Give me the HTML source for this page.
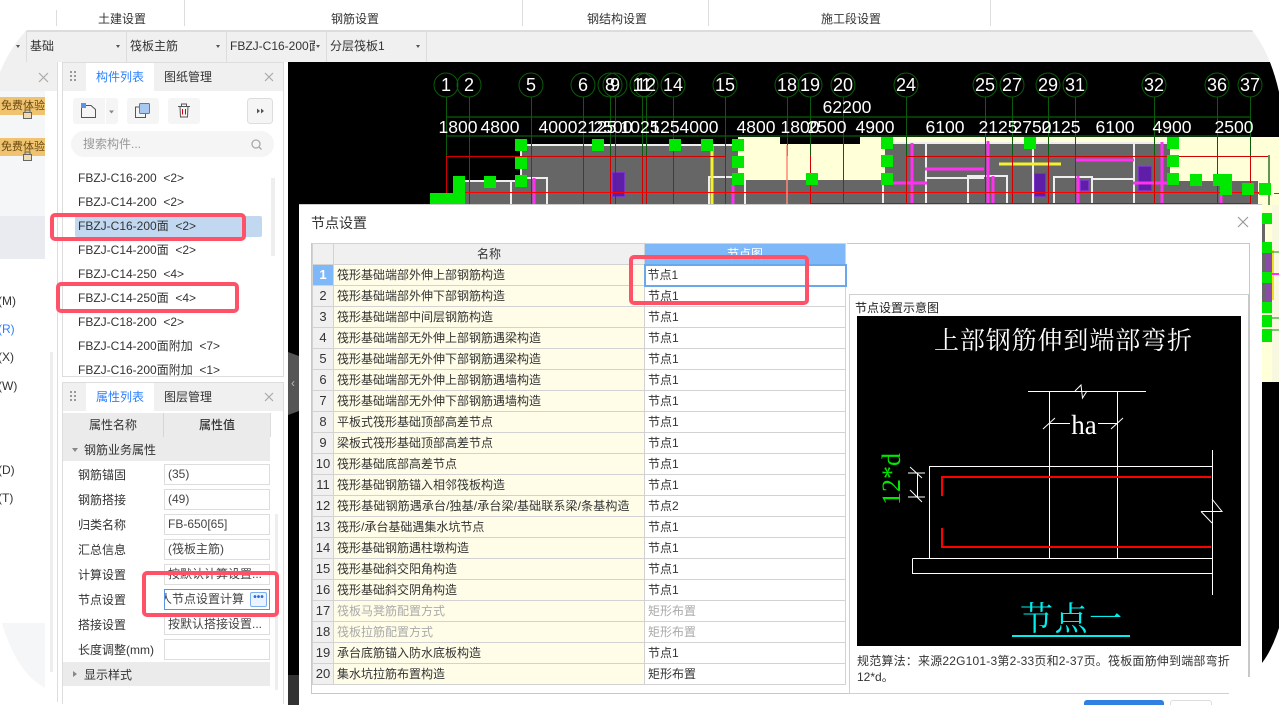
<!DOCTYPE html>
<html lang="zh"><head><meta charset="utf-8"><title>节点设置</title>
<style>
*{box-sizing:border-box}
html,body{margin:0;padding:0;width:1279px;height:705px;overflow:hidden;background:#fff}
body{position:relative;font:12px/20px "Liberation Sans","Noto Sans CJK SC",sans-serif;color:#333}
.a{position:absolute}
.t{position:absolute;white-space:nowrap;line-height:20px}
.dv{position:absolute;width:1px;background:#ddd}
.arrow{position:absolute;top:45px;width:0;height:0;border-left:2.5px solid transparent;border-right:2.5px solid transparent;border-top:3px solid #555}
.inp{position:absolute;left:164px;width:106px;height:21px;border:1px solid #ddd;background:#fff;padding-left:3px;line-height:19px;white-space:nowrap;overflow:hidden;color:#444}
.red{position:absolute;border:4px solid #ff5268;border-radius:5px;z-index:50}
table{position:absolute;left:312px;top:243px;border-collapse:collapse;table-layout:fixed;width:533px;background:#fff}
td,th{border:1px solid #d2d2d2;height:21px;padding:0 0 0 3px;font-weight:400;font-size:12px;line-height:18px;white-space:nowrap;overflow:hidden;color:#333}
th{background:#f0f0f0;text-align:center;padding:0}
td.n{background:#f0f0f0;text-align:center;padding:0;font-size:13px}
td.y{background:#fffde8}
tr.g td.y,tr.g td.v{color:#aaa}
svg{position:absolute;left:0;top:0}
</style></head><body>

<!-- top bar -->
<div class="dv" style="left:56px;top:10px;height:16px"></div>
<div class="dv" style="left:184px;top:0;height:26px"></div>
<div class="dv" style="left:522px;top:0;height:26px"></div>
<div class="dv" style="left:708px;top:0;height:26px"></div>
<div class="dv" style="left:990px;top:0;height:26px"></div>
<div class="t" style="left:98px;top:9px">土建设置</div>
<div class="t" style="left:331px;top:9px">钢筋设置</div>
<div class="t" style="left:587px;top:9px">钢结构设置</div>
<div class="t" style="left:821px;top:9px">施工段设置</div>

<!-- toolbar -->
<div class="a" style="left:0;top:30px;width:1279px;height:32px;background:#f0f0f0;border-top:2px solid #dcdcdc"></div>
<div class="dv" style="left:26px;top:31px;height:31px"></div>
<div class="dv" style="left:126px;top:31px;height:31px"></div>
<div class="dv" style="left:226px;top:31px;height:31px"></div>
<div class="dv" style="left:326px;top:31px;height:31px"></div>
<div class="dv" style="left:426px;top:31px;height:31px"></div>
<div class="arrow" style="left:16px"></div><div class="arrow" style="left:116px"></div><div class="arrow" style="left:216px"></div><div class="arrow" style="left:316px"></div><div class="arrow" style="left:416px"></div>
<div class="t" style="left:30px;top:36px">基础</div>
<div class="t" style="left:130px;top:36px">筏板主筋</div>
<div class="t" style="left:230px;top:36px;width:85px;overflow:hidden">FBZJ-C16-200面</div>
<div class="t" style="left:330px;top:36px">分层筏板1</div>

<!-- far left panel -->
<div class="a" style="left:0;top:62px;width:57px;height:29px;background:#f0f0f0"></div>
<div class="a" style="left:0;top:91px;width:45px;height:125px;background:#f5f6f8"></div>
<div class="a" style="left:0;top:216px;width:45px;height:43px;background:#e9ebf0"></div>
<div class="a" style="left:57px;top:62px;width:1px;height:640px;background:#ddd"></div>
<div class="a" style="left:50px;top:352px;width:3px;height:320px;background:#eee"></div>
<div class="a" style="left:0;top:97px;width:45px;height:18px;background:#efc370"></div>
<div class="a" style="left:0;top:138px;width:45px;height:18px;background:#efc370"></div>
<div class="t" style="left:1px;top:96px;color:#6b4a10;font-size:11px">免费体验</div>
<div class="t" style="left:1px;top:137px;color:#6b4a10;font-size:11px">免费体验</div>
<div class="t" style="left:-2px;top:291px">(M)</div>
<div class="t" style="left:-2px;top:319px;color:#2a7fff">(R)</div>
<div class="t" style="left:-2px;top:347px">(X)</div>
<div class="t" style="left:-2px;top:376px">(W)</div>
<div class="t" style="left:-2px;top:460px">(D)</div>
<div class="t" style="left:-2px;top:488px">(T)</div>
<svg width="60" height="705" style="left:0;top:0">
<path d="M2 623H45V688Q16 672 2 623Z" fill="#f5f6f8"/>
<path d="M39 73L48 82M48 73L39 82" stroke="#aaa" stroke-width="1.200" fill="none"/>
<g fill="#efdcb0" stroke="#666"><rect x="23.500" y="112.500" width="8" height="6"/><rect x="23.500" y="154.500" width="8" height="6"/></g>
<path d="M25 112v-2h5v2M25 154v-2h5v2" fill="none" stroke="#666"/>
</svg>

<!-- list panel -->
<div class="a" style="left:62px;top:62px;width:222px;height:315px;border:1px solid #ddd;background:#fff"></div>
<div class="a" style="left:63px;top:63px;width:220px;height:28px;background:#f0f0f0"></div>
<div class="a" style="left:86px;top:63px;width:68px;height:28px;background:#fff"></div>
<div class="t" style="left:96px;top:67px;color:#2a7fff">构件列表</div>
<div class="t" style="left:164px;top:67px">图纸管理</div>
<svg width="284" height="705" style="left:0;top:0">
<path d="M265 73L273 81M273 73L265 81M265 393L273 401M273 393L265 401" stroke="#aaa" stroke-width="1.200" fill="none"/>
<g fill="#999"><rect x="70" y="71" width="2" height="2"/><rect x="74" y="71" width="2" height="2"/><rect x="70" y="75" width="2" height="2"/><rect x="74" y="75" width="2" height="2"/><rect x="70" y="79" width="2" height="2"/><rect x="74" y="79" width="2" height="2"/>
<rect x="70" y="391" width="2" height="2"/><rect x="74" y="391" width="2" height="2"/><rect x="70" y="395" width="2" height="2"/><rect x="74" y="395" width="2" height="2"/><rect x="70" y="399" width="2" height="2"/><rect x="74" y="399" width="2" height="2"/></g>
<rect x="73" y="98" width="45" height="26" rx="3" fill="#f5f5f5"/><rect x="105" y="98" width="1" height="26" fill="#fff"/>
<rect x="127" y="98" width="32" height="26" rx="3" fill="#f5f5f5"/>
<rect x="168" y="98" width="32" height="26" rx="3" fill="#f5f5f5"/>
<rect x="247.500" y="98.500" width="25" height="25" rx="3" fill="#f5f5f5" stroke="#ddd"/>
<path d="M81.500 105.500H91L95.500 109.500V117.500H81.500Z" fill="none" stroke="#555"/>
<rect x="81" y="103" width="5" height="5" fill="#5b93e8"/>
<path d="M109 110.500h5l-2.500 3z" fill="#888"/>
<rect x="139.500" y="103.500" width="10" height="10" rx="1" fill="#a9c8f0" stroke="#3f7fd8"/>
<path d="M139 107h-3.500v10.500h10v-3.500" fill="none" stroke="#555"/>
<path d="M178 106.500h12M180 106.500l.5 10.500h7l.5-10.500M181.500 106v-2h5v2" fill="none" stroke="#555"/>
<rect x="182" y="109" width="1" height="5.500" fill="#d00"/><rect x="185" y="109" width="1" height="5.500" fill="#d00"/>
<path d="M257 108.500l3 2.500-3 2.500zM261 108.500l3 2.500-3 2.500z" fill="#555"/>
<rect x="71" y="131" width="203" height="26" rx="13" fill="#f5f5f5"/>
<circle cx="256" cy="144" r="4" fill="none" stroke="#aaa" stroke-width="1.300"/><path d="M259 147l2.500 2.500" stroke="#aaa" stroke-width="1.300"/>
</svg>
<div class="t" style="left:83px;top:134px;color:#999">搜索构件...</div>
<div class="a" style="left:75px;top:216px;width:187px;height:21px;border-radius:2px;background:#c2d8f0"></div>
<div class="a" style="left:271px;top:178px;width:4px;height:78px;background:#eee"></div>
<div class="t" style="left:78px;top:168px">FBZJ-C16-200 &nbsp;&lt;2&gt;</div>
<div class="t" style="left:78px;top:192px">FBZJ-C14-200 &nbsp;&lt;2&gt;</div>
<div class="t" style="left:78px;top:216px">FBZJ-C16-200面 &nbsp;&lt;2&gt;</div>
<div class="t" style="left:78px;top:240px">FBZJ-C14-200面 &nbsp;&lt;2&gt;</div>
<div class="t" style="left:78px;top:264px">FBZJ-C14-250 &nbsp;&lt;4&gt;</div>
<div class="t" style="left:78px;top:288px">FBZJ-C14-250面 &nbsp;&lt;4&gt;</div>
<div class="t" style="left:78px;top:312px">FBZJ-C18-200 &nbsp;&lt;2&gt;</div>
<div class="t" style="left:78px;top:336px">FBZJ-C14-200面附加 &nbsp;&lt;7&gt;</div>
<div class="t" style="left:78px;top:360px">FBZJ-C16-200面附加 &nbsp;&lt;1&gt;</div>

<!-- property panel -->
<div class="a" style="left:62px;top:382px;width:222px;height:322px;border:1px solid #ddd;border-bottom:0;background:#fff"></div>
<div class="a" style="left:63px;top:383px;width:220px;height:28px;background:#f0f0f0"></div>
<div class="a" style="left:86px;top:383px;width:68px;height:28px;background:#fff"></div>
<div class="t" style="left:96px;top:387px;color:#2a7fff">属性列表</div>
<div class="t" style="left:164px;top:387px">图层管理</div>
<svg width="284" height="705" style="left:0;top:0;z-index:2"><path d="M265 393L273 401M273 393L265 401" stroke="#aaa" stroke-width="1.200" fill="none"/>
<g fill="#999"><rect x="70" y="391" width="2" height="2"/><rect x="74" y="391" width="2" height="2"/><rect x="70" y="395" width="2" height="2"/><rect x="74" y="395" width="2" height="2"/><rect x="70" y="399" width="2" height="2"/><rect x="74" y="399" width="2" height="2"/></g></svg>
<div class="a" style="left:63px;top:413px;width:208px;height:24px;background:#ebebeb;border-right:1px solid #ddd"></div>
<div class="a" style="left:163px;top:413px;width:1px;height:24px;background:#d5d5d5"></div>
<div class="t" style="left:89px;top:415px">属性名称</div>
<div class="t" style="left:199px;top:415px;font-weight:500">属性值</div>
<div class="a" style="left:63px;top:437px;width:207px;height:24px;background:#ebebeb"></div>
<div class="a" style="left:72px;top:448px;border-left:3px solid transparent;border-right:3px solid transparent;border-top:4px solid #888"></div>
<div class="t" style="left:84px;top:440px">钢筋业务属性</div>
<div class="t" style="left:78px;top:465px">钢筋锚固</div><div class="inp" style="top:464px">(35)</div>
<div class="t" style="left:78px;top:490px">钢筋搭接</div><div class="inp" style="top:489px">(49)</div>
<div class="t" style="left:78px;top:515px">归类名称</div><div class="inp" style="top:514px">FB-650[65]</div>
<div class="t" style="left:78px;top:540px">汇总信息</div><div class="inp" style="top:539px">(筏板主筋)</div>
<div class="t" style="left:78px;top:565px">计算设置</div><div class="inp" style="top:564px">按默认计算设置...</div>
<div class="t" style="left:78px;top:590px">节点设置</div><div class="inp" style="top:589px;border-color:#5b93e8;padding-left:0;text-indent:-5px">人节点设置计算</div>
<div class="a" style="left:250px;top:592px;width:17px;height:15px;border:1px solid #7fb0ee;border-radius:2px;background:#eaf3ff;color:#2a6fd8;font:700 10px/10px 'Liberation Sans',sans-serif;text-align:center;letter-spacing:0">•••</div>
<div class="t" style="left:78px;top:615px">搭接设置</div><div class="inp" style="top:614px">按默认搭接设置...</div>
<div class="t" style="left:78px;top:640px">长度调整(mm)</div><div class="inp" style="top:639px"></div>
<div class="a" style="left:63px;top:662px;width:207px;height:24px;background:#ebebeb"></div>
<div class="a" style="left:73px;top:671px;border-top:3px solid transparent;border-bottom:3px solid transparent;border-left:4px solid #888"></div>
<div class="t" style="left:84px;top:665px">显示样式</div>
<div class="a" style="left:275px;top:514px;width:3px;height:176px;background:#eee"></div>

<!-- CAD canvas -->
<div class="a" style="left:288px;top:62px;width:991px;height:643px;background:#000"></div>
<div class="a" style="left:288px;top:675px;width:11px;height:30px;background:#333"></div>
<div class="a" style="left:288px;top:352px;width:12px;height:63px;background:#555;clip-path:polygon(0 0,100% 7%,100% 93%,0 100%)"></div>
<div class="t" style="left:291px;top:373px;color:#bbb;font-size:12px">‹</div>
<svg width="1279" height="705" style="font-family:'Liberation Sans',sans-serif">
<!-- fills -->
<rect x="738" y="137" width="541" height="68" fill="#ffffd8"/>
<rect x="780" y="137" width="80" height="7" fill="#000"/>
<rect x="521" y="145" width="217" height="60" fill="#666"/>
<rect x="465" y="181" width="56" height="24" fill="#666"/>
<rect x="738" y="180" width="150" height="25" fill="#666"/>
<rect x="885" y="143" width="285" height="62" fill="#666"/>
<rect x="1170" y="181" width="88" height="24" fill="#666"/>
<rect x="1262" y="205" width="17" height="177" fill="#ffffd8"/>
<rect x="1272" y="205" width="7" height="177" fill="#f8f8e0"/>
<rect x="1262" y="224" width="3" height="80" fill="#666"/>
<rect x="1265" y="250" width="7" height="52" fill="#8a4aa8"/>
<rect x="1272" y="250" width="2" height="50" fill="#f0e020"/>
<path d="M1272 274h8" stroke="#ff30f0" stroke-width="2"/>
<path d="M1272 252h7M1272 318h7M1272 330h7" stroke="#0a8c0a"/>
<path d="M1258 193.500H1279" stroke="#0a8c0a" stroke-dasharray="5 3"/>
<!-- white -->
<g fill="none" stroke="#eee" stroke-width="2">
<path d="M521 181V145H738M465 181H521M521 178H547V205M511 181V205M709 205V177H733M745 205V180"/>
<path d="M926 143V205M1134 143V205M1033 143V205M927 178H984M968 205V176H1007V205M1054 205V177H1092V205M1092 179H1134M883 183V205M885 143H1170"/>
</g>
<!-- purple -->
<g fill="#5e1ea8" stroke="#7a34c4"><rect x="612.500" y="172.500" width="12" height="24"/><rect x="1034.500" y="173.500" width="11" height="23"/><rect x="1080.500" y="180.500" width="8" height="10"/><rect x="1138.500" y="166.500" width="13" height="24"/></g>
<!-- yellow / magenta -->
<g stroke="#f5f030" stroke-width="3" fill="none"><path d="M712 145V205M999 164H1061"/></g>
<g stroke="#ff30f0" stroke-width="3" fill="none"><path d="M534 178V205M733 185V205M912 143V205M988 141V203M993 176V203M893 183H927M925 169H984M1075 160H1134M1133 183H1167M1162 142V203M1078 176V203M1221 190V203"/></g>
<!-- grid axes -->
<g stroke="#0a5c0a" fill="none" stroke-width="1">
<path d="M446.500 97V156M469.500 97V156M531.500 97V156M583.500 97V156M610.500 97V156M615.500 97V156M642.500 97V156M646.500 97V156M673.500 97V156M725.500 97V156M787.500 97V156M810.500 97V156M843.500 97V156M906.500 97V156M985.500 97V156M1012.500 97V156M1048.500 97V156M1075.500 97V156M1154.500 97V156M1217.500 97V156M1250.500 97V156"/>
<path d="M446 117H1250M446 136H1250M1269 155V205" stroke-width="1.300"/>
<circle cx="446" cy="85" r="12"/><circle cx="469" cy="85" r="12"/><circle cx="531" cy="85" r="12"/><circle cx="583" cy="85" r="12"/><circle cx="610" cy="85" r="12"/><circle cx="615" cy="85" r="12"/><circle cx="642" cy="85" r="12"/><circle cx="646" cy="85" r="12"/><circle cx="673" cy="85" r="12"/><circle cx="725" cy="85" r="12"/><circle cx="787" cy="85" r="12"/><circle cx="810" cy="85" r="12"/><circle cx="843" cy="85" r="12"/><circle cx="906" cy="85" r="12"/><circle cx="985" cy="85" r="12"/><circle cx="1012" cy="85" r="12"/><circle cx="1048" cy="85" r="12"/><circle cx="1075" cy="85" r="12"/><circle cx="1154" cy="85" r="12"/><circle cx="1217" cy="85" r="12"/><circle cx="1250" cy="85" r="12"/>
</g>
<!-- red -->
<g fill="none" stroke="#d00000" stroke-width="1"><path d="M446.500 193V156.500H725.500V205M469.500 156V205M531.500 156V205M583.500 156V205M610.500 156V205M615.500 156V205M642.500 156V205M646.500 156V205M673.500 156V205M810.500 156V203.500H1250.500V156M843.500 156V203M906 156.500H1268M906.500 156V203M985.500 156V203M1012.500 156V203M1048.500 156V203M1075.500 156V203M1154.500 156V203M1217.500 156V203"/></g>
<path d="M465 192.500H1262" stroke="#f00" stroke-width="1"/>
<path d="M787 145V205" stroke="#ff8878" stroke-width="1.500"/>
<!-- green blocks -->
<g fill="#00e800">
<path d="M430 193H453V176H465V205H430Z"/>
<rect x="515" y="139" width="12" height="12"/><rect x="515" y="157" width="12" height="12"/><rect x="515" y="175" width="12" height="12"/><rect x="484" y="176" width="12" height="12"/><rect x="592" y="139" width="12" height="12"/><rect x="669" y="139" width="12" height="12"/><rect x="701" y="139" width="12" height="12"/><rect x="732" y="139" width="12" height="12"/><rect x="732" y="156" width="12" height="12"/><rect x="732" y="173" width="12" height="12"/>
<rect x="806" y="173" width="12" height="12"/><rect x="881" y="137" width="12" height="12"/><rect x="881" y="155" width="12" height="12"/><rect x="881" y="173" width="12" height="12"/><rect x="1024" y="137" width="12" height="12"/><rect x="1167" y="137" width="12" height="12"/><rect x="1167" y="155" width="12" height="12"/><rect x="1167" y="173" width="12" height="12"/><rect x="1190" y="174" width="12" height="12"/><rect x="1213" y="174" width="12" height="12"/><path d="M1220 174h12v21h-12z"/><rect x="1242" y="183" width="12" height="12"/><rect x="1259" y="183" width="12" height="12"/>
<rect x="1262" y="213" width="10" height="11"/><rect x="1262" y="242" width="10" height="11"/><rect x="1262" y="272" width="10" height="11"/><rect x="1262" y="302" width="10" height="11"/><rect x="1262" y="315" width="10" height="12"/><rect x="1262" y="329" width="10" height="13"/>
</g>
<!-- labels -->
<g fill="#fff" font-size="18" text-anchor="middle">
<text x="446" y="91">1</text><text x="469" y="91">2</text><text x="531" y="91">5</text><text x="583" y="91">6</text><text x="610" y="91">8</text><text x="615" y="91">9</text><text x="642" y="91">11</text><text x="646" y="91">12</text><text x="673" y="91">14</text><text x="725" y="91">15</text><text x="787" y="91">18</text><text x="810" y="91">19</text><text x="843" y="91">20</text><text x="906" y="91">24</text><text x="985" y="91">25</text><text x="1012" y="91">27</text><text x="1048" y="91">29</text><text x="1075" y="91">31</text><text x="1154" y="91">32</text><text x="1217" y="91">36</text><text x="1250" y="91">37</text>
</g>
<g fill="#fff" font-size="17.500" text-anchor="middle">
<text x="847" y="113">62200</text>
<text x="458" y="133">1800</text><text x="500" y="133">4800</text><text x="558" y="133">4000</text><text x="597" y="133">2125</text><text x="613" y="133">2500</text><text x="640" y="133">1025</text><text x="665" y="133">125</text><text x="699" y="133">4000</text><text x="756" y="133">4800</text><text x="800" y="133">1800</text><text x="827" y="133">2500</text><text x="875" y="133">4900</text><text x="945" y="133">6100</text><text x="998" y="133">2125</text><text x="1032" y="133">2750</text><text x="1061" y="133">2125</text><text x="1115" y="133">6100</text><text x="1172" y="133">4900</text><text x="1234" y="133">2500</text>
</g>
</svg>

<!-- dialog -->
<div class="a" style="left:299px;top:204px;width:963px;height:501px;background:#fff;border-top:1px solid #ccc"></div>
<div class="t" style="left:311px;top:213px;font-size:14px">节点设置</div>
<svg width="1279" height="705"><path d="M1238 217L1248 227M1248 217L1238 227" stroke="#999" stroke-width="1.200" fill="none"/></svg>
<div class="a" style="left:311px;top:243px;width:939px;height:451px;border:1px solid #c8c8c8"></div>
<table>
<colgroup><col style="width:21px"><col style="width:311px"><col style="width:201px"></colgroup>
<tr style="height:21px"><th></th><th>名称</th><th style="background:#7fb8f8;color:#fff">节点图</th></tr>
<tr><td class="n" style="background:#7fb8f8;color:#fff;font-weight:700">1</td><td class="y">筏形基础端部外伸上部钢筋构造</td><td class="v" style="border:2px solid #6aa8ee;padding-left:2px">节点1</td></tr>
<tr><td class="n">2</td><td class="y">筏形基础端部外伸下部钢筋构造</td><td class="v">节点1</td></tr>
<tr><td class="n">3</td><td class="y">筏形基础端部中间层钢筋构造</td><td class="v">节点1</td></tr>
<tr><td class="n">4</td><td class="y">筏形基础端部无外伸上部钢筋遇梁构造</td><td class="v">节点1</td></tr>
<tr><td class="n">5</td><td class="y">筏形基础端部无外伸下部钢筋遇梁构造</td><td class="v">节点1</td></tr>
<tr><td class="n">6</td><td class="y">筏形基础端部无外伸上部钢筋遇墙构造</td><td class="v">节点1</td></tr>
<tr><td class="n">7</td><td class="y">筏形基础端部无外伸下部钢筋遇墙构造</td><td class="v">节点1</td></tr>
<tr><td class="n">8</td><td class="y">平板式筏形基础顶部高差节点</td><td class="v">节点1</td></tr>
<tr><td class="n">9</td><td class="y">梁板式筏形基础顶部高差节点</td><td class="v">节点1</td></tr>
<tr><td class="n">10</td><td class="y">筏形基础底部高差节点</td><td class="v">节点1</td></tr>
<tr><td class="n">11</td><td class="y">筏形基础钢筋锚入相邻筏板构造</td><td class="v">节点1</td></tr>
<tr><td class="n">12</td><td class="y"><span style="letter-spacing:.12px">筏形基础钢筋遇承台/独基/承台梁/基础联系梁/条基构造</span></td><td class="v">节点2</td></tr>
<tr><td class="n">13</td><td class="y">筏形/承台基础遇集水坑节点</td><td class="v">节点1</td></tr>
<tr><td class="n">14</td><td class="y">筏形基础钢筋遇柱墩构造</td><td class="v">节点1</td></tr>
<tr><td class="n">15</td><td class="y">筏形基础斜交阳角构造</td><td class="v">节点1</td></tr>
<tr><td class="n">16</td><td class="y">筏形基础斜交阴角构造</td><td class="v">节点1</td></tr>
<tr class="g"><td class="n">17</td><td class="y">筏板马凳筋配置方式</td><td class="v">矩形布置</td></tr>
<tr class="g"><td class="n">18</td><td class="y">筏板拉筋配置方式</td><td class="v">矩形布置</td></tr>
<tr><td class="n">19</td><td class="y">承台底筋锚入防水底板构造</td><td class="v">节点1</td></tr>
<tr><td class="n">20</td><td class="y">集水坑拉筋布置构造</td><td class="v">矩形布置</td></tr>
</table>

<!-- preview -->
<div class="a" style="left:849px;top:294px;width:401px;height:400px;background:#fff;border:1px solid #d0d0d0;border-right:2px solid #c8c8c8"></div>
<div class="a" style="left:1229px;top:677px;width:33px;height:28px;background:#fff"></div>
<div class="t" style="left:855px;top:298px;color:#222">节点设置示意图</div>
<div class="a" style="left:857px;top:316px;width:384px;height:330px;background:#000"></div>
<svg width="1279" height="705">
<text x="934" y="349" font-family="'Noto Serif CJK SC','Liberation Serif',serif" font-size="25" fill="#fff" textLength="258">上部钢筋伸到端部弯折</text>
<g fill="none" stroke="#fff" stroke-width="1">
<path d="M1028 391.500H1146M1075 391L1081 385L1082.500 398L1087 391"/>
<path d="M1049.500 391V558M1117.500 391V558"/>
<path d="M1049 423.500H1070M1098 423.500H1117M1043 429L1055 418M1111 429L1123 418"/>
<path d="M929.500 558V466.500H1212M1212.500 450V595M912.500 558.500H1212.500M912.500 558.500V573.500H1212.500"/>
<path d="M908 473H925M908 497H925M917.500 473V497M910 467L922 478M910 490L922 502"/>
<path d="M1201 511.500H1222L1212 499M1201 511.500L1212 523"/>
</g>
<path d="M942 496V477H1211M942 528V547H1211" fill="none" stroke="#f00" stroke-width="2"/>
<text x="1084" y="434" text-anchor="middle" font-family="'Liberation Serif',serif" font-size="27" fill="#fff">ha</text>
<text transform="translate(900 505) rotate(-90)" font-family="'Liberation Serif',serif" font-size="26" fill="#00e800">12*d</text>
<text x="1020" y="630" font-family="'Noto Serif CJK SC','Liberation Serif',serif" font-size="33" fill="#00f0f0" textLength="102">节点一</text>
<path d="M1012 636H1130" stroke="#00f0f0" stroke-width="2"/>
</svg>
<div class="t" style="left:857px;top:651px;letter-spacing:.2px">规范算法：来源22G101-3第2-33页和2-37页。筏板面筋伸到端部弯折</div>
<div class="t" style="left:857px;top:667px">12*d。</div>
<div class="a" style="left:1084px;top:700px;width:80px;height:8px;background:#2f80e0;border-radius:3px 3px 0 0"></div>
<div class="a" style="left:1170px;top:700px;width:42px;height:8px;border:1px solid #ddd;border-radius:3px 3px 0 0;background:#fff"></div>

<!-- annotations -->
<div class="red" style="left:50px;top:213px;width:196px;height:28px"></div>
<div class="red" style="left:56px;top:282px;width:183px;height:31px"></div>
<div class="red" style="left:142px;top:571px;width:137px;height:46px"></div>
<div class="red" style="left:629px;top:255px;width:180px;height:50px"></div>

<!-- rounded screenshot corners -->
<svg width="1279" height="705" style="z-index:60">
<path d="M0 29H28Q12 44 0 72Z" fill="#fff"/>
<path d="M1251 29Q1270 52 1279 92V29Z" fill="#fff"/>
<path d="M1262 663Q1272 650 1279 628V705H1262Z" fill="#fff"/>
</svg>
</body></html>
